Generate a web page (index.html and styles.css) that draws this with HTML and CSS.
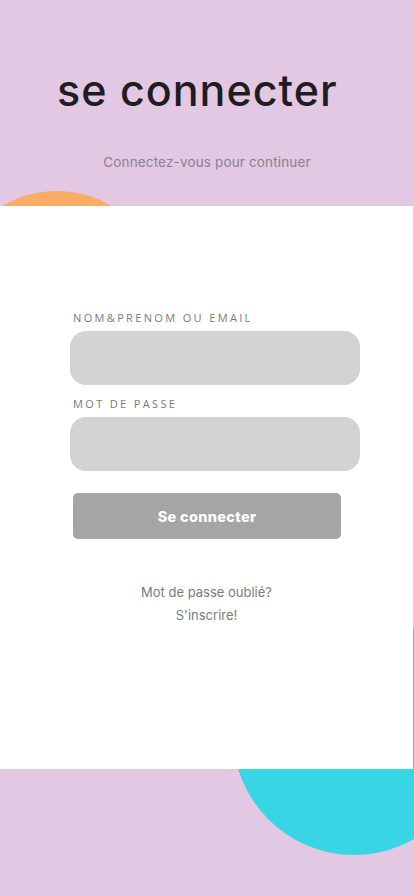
FILE: index.html
```html
<!DOCTYPE html>
<html lang="fr">
<head>
<meta charset="utf-8">
<title>se connecter</title>
<link rel="stylesheet" href="styles.css">
</head>
<body>
<div class="page">
  <div class="blob blob-orange"></div>
  <div class="blob blob-cyan"></div>
  <header class="hero">
    <h1 class="title">se connecter</h1>
    <p class="subtitle">Connectez-vous pour continuer</p>
  </header>
  <main class="card">
    <form class="form">
      <label class="label" for="user">NOM&amp;PRENOM OU EMAIL</label>
      <input class="field" id="user" type="text">
      <label class="label" for="pass">MOT DE PASSE</label>
      <input class="field" id="pass" type="password">
      <button class="btn" type="button">Se connecter</button>
    </form>
    <div class="links">
      <a class="link" href="#">Mot de passe oublié?</a>
      <a class="link" href="#">S'inscrire!</a>
    </div>
  </main>
</div>
</body>
</html>
```

FILE: styles.css
```css
* { box-sizing: border-box; }
html, body { margin: 0; padding: 0; }
body {
  background: #e2c8e3;
  font-family: Inter, "Noto Sans", sans-serif;
}
.page {
  position: relative;
  width: 414px;
  height: 896px;
  overflow: hidden;
}
.blob {
  position: absolute;
  border-radius: 50%;
  z-index: 0;
}
.blob-orange {
  width: 216px;
  height: 216px;
  left: -51px;
  top: 191px;
  background: #fbad68;
}
.blob-cyan {
  width: 242px;
  height: 242px;
  left: 233px;
  top: 613px;
  background: #38d5e5;
}
.hero {
  position: relative;
  z-index: 1;
  height: 206px;
  padding-top: 62px;
}
.title {
  margin: 0 0 0 57px;
  font-family: Inter, "Noto Sans", sans-serif;
  font-weight: 500;
  font-size: 43px;
  line-height: 56px;
  color: #1f1d22;
  letter-spacing: 1px;
}
.subtitle {
  margin: 36px 0 0;
  text-align: center;
  font-size: 13.5px;
  letter-spacing: 0.15px;
  color: #8a8190;
}
.card {
  position: relative;
  z-index: 1;
  width: 413px;
  height: 563px;
  background: #ffffff;
  padding-top: 104px;
}
.form {
  display: flex;
  flex-direction: column;
  padding: 0 54px 0 70px;
}
.label {
  font-family: "Open Sans", sans-serif;
  font-size: 11px;
  letter-spacing: 2.35px;
  color: #7a7a7a;
  margin-left: 3px;
  line-height: 16px;
  margin-bottom: 5px;
}
.field {
  height: 54px;
  width: 290px;
  border: none;
  border-radius: 16px;
  background: #d3d3d3;
  margin-bottom: 11px;
  outline: none;
}
.btn {
  margin: 11px 0 0 3px;
  width: 268px;
  height: 46px;
  border: none;
  border-radius: 5px;
  background: #a5a5a5;
  color: #ffffff;
  font-family: Inter, sans-serif;
  font-weight: 800;
  font-size: 14.5px;
  letter-spacing: 0.3px;
}
.links {
  margin-top: 44px;
  display: flex;
  flex-direction: column;
  align-items: center;
  gap: 4px;
}
.link {
  font-size: 13px;
  line-height: 19px;
  color: #7b7b7b;
  text-decoration: none;
}
```
